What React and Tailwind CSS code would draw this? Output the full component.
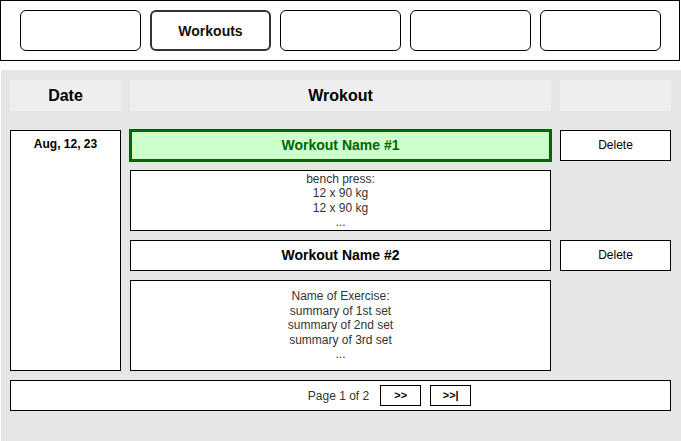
import React from "react";

export default function App() {
  const font = { fontFamily: '"Liberation Sans", Arial, sans-serif' };
  return (
    <div className="w-[681px] h-[441px] bg-white text-black" style={font}>
      {/* Top nav */}
      <div className="w-[680px] h-[61px] border border-black flex gap-[9px] pl-[19px] pt-[9px]">
        <div className="w-[121px] h-[41px] rounded-[6px] border border-black" />
        <div className="w-[121px] h-[41px] rounded-[6px] border-2 border-[#333] flex items-center justify-center pt-[2px] text-[14px] font-bold text-[#111]">
          Workouts
        </div>
        <div className="w-[121px] h-[41px] rounded-[6px] border border-black" />
        <div className="w-[121px] h-[41px] rounded-[6px] border border-black" />
        <div className="w-[121px] h-[41px] rounded-[6px] border border-black" />
      </div>

      {/* Main area */}
      <div className="mt-[9px] ml-[1px] w-[680px] h-[371px] bg-[#e6e6e6] pl-[9px] pt-[10px]">
        {/* Header row */}
        <div className="grid grid-cols-[111px_421px_111px] gap-[9px] h-[31px]">
          <div className="bg-[#eeeeee] flex items-center justify-center text-[16px] font-bold">Date</div>
          <div className="bg-[#eeeeee] flex items-center justify-center text-[16px] font-bold">Wrokout</div>
          <div className="bg-[#eeeeee]" />
        </div>

        {/* Body grid */}
        <div className="mt-[19px] grid grid-cols-[111px_421px_111px] grid-rows-[31px_61px_31px_91px] gap-[9px]">
          <div className="row-span-4 bg-white border border-black flex justify-center pt-[6px] text-[12px] font-bold leading-[14px]">
            Aug, 12, 23
          </div>
          <div className="-m-px border-[3px] border-[#006600] bg-[#ccffcc] flex items-center justify-center text-[14px] font-bold text-[#006600]">
            Workout Name #1
          </div>
          <div className="bg-white border border-black flex items-center justify-center pb-px text-[12px]">
            Delete
          </div>
          <div className="col-start-2 bg-white border border-black flex flex-col items-center justify-center text-[12px] leading-[14.5px] text-[#333]">
            <span>bench press:</span>
            <span>12 x 90 kg</span>
            <span>12 x 90 kg</span>
            <span>...</span>
          </div>
          <div className="col-start-2 bg-white border border-black flex items-center justify-center text-[14px] font-bold">
            Workout Name #2
          </div>
          <div className="bg-white border border-black flex items-center justify-center pb-px text-[12px]">
            Delete
          </div>
          <div className="col-start-2 bg-white border border-black flex flex-col items-center justify-center text-[12px] leading-[14.5px] text-[#333]">
            <span>Name of Exercise:</span>
            <span>summary of 1st set</span>
            <span>summary of 2nd set</span>
            <span>summary of 3rd set</span>
            <span>...</span>
          </div>
        </div>

        {/* Pagination */}
        <div className="mt-[9px] w-[661px] h-[31px] bg-white border border-black grid grid-cols-[1fr_auto_1fr] items-center">
          <div />
          <div className="text-[12px] text-[#333] -translate-x-[2px]">Page 1 of 2</div>
          <div className="flex gap-[9px] pl-[9px]">
            <div className="w-[41px] h-[21px] border border-black flex items-center justify-center text-[11px] font-bold">&gt;&gt;</div>
            <div className="w-[41px] h-[21px] border border-black flex items-center justify-center text-[11px] font-bold">&gt;&gt;|</div>
          </div>
        </div>
      </div>
    </div>
  );
}
